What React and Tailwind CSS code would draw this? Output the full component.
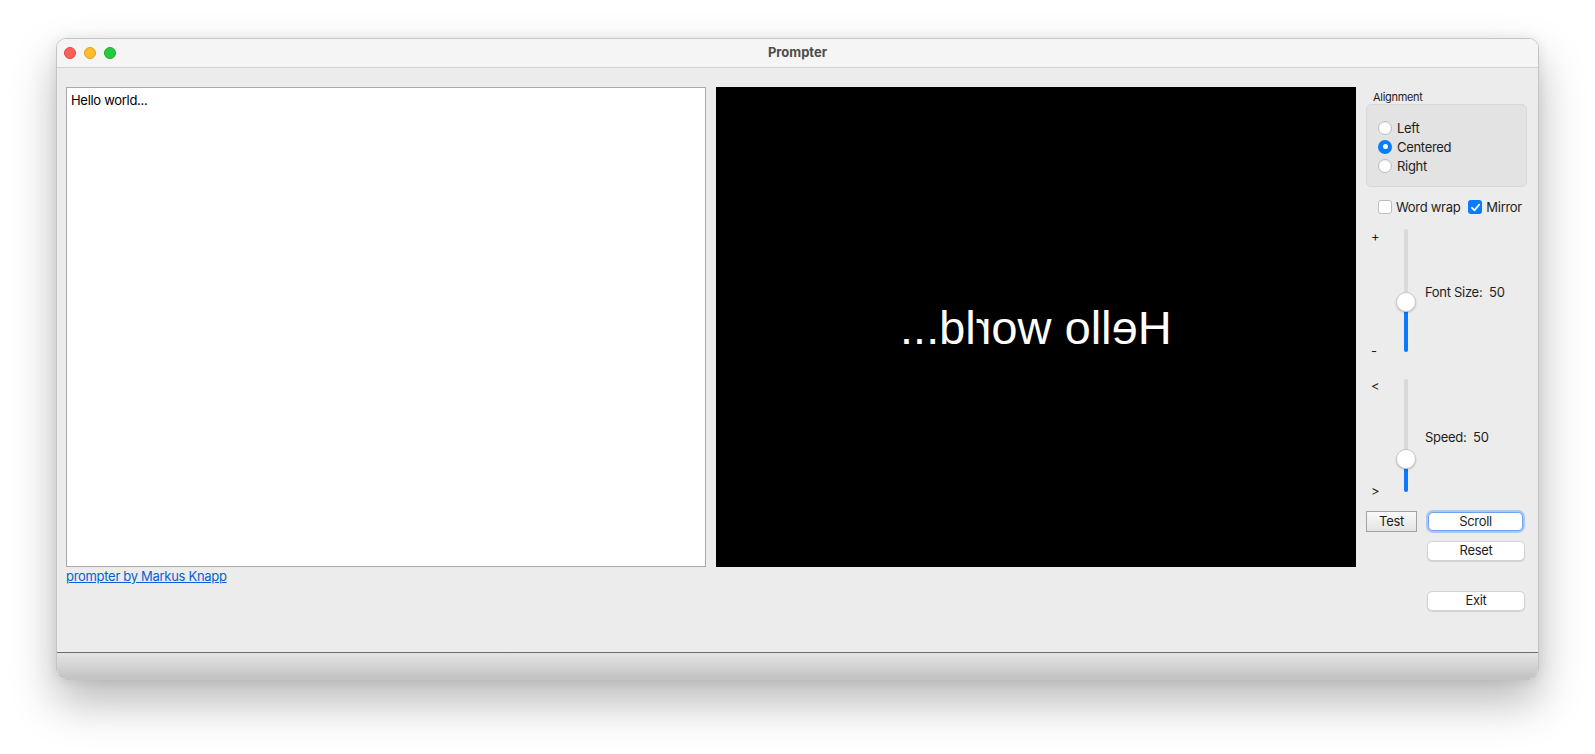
import React from "react";

const ui = { fontFamily: "Inter, 'Liberation Sans', sans-serif" };

function Radio({ checked, label }) {
  return (
    <div className="flex items-center h-[19px]">
      {checked ? (
        <div className="w-[14px] h-[14px] rounded-full bg-[#0a7bff] flex items-center justify-center">
          <div className="w-[5px] h-[5px] rounded-full bg-white" />
        </div>
      ) : (
        <div className="w-[14px] h-[14px] rounded-full bg-white border border-[#bdbdbd] shadow-[inset_0_1px_1px_rgba(0,0,0,0.06)]" />
      )}
      <span className="ml-[5px] text-[13px] leading-[16px] text-[#1e1e1e] whitespace-nowrap">{label}</span>
    </div>
  );
}

function Check({ checked, label }) {
  return (
    <div className="flex items-center shrink-0">
      {checked ? (
        <div className="w-[14px] h-[14px] rounded-[3px] bg-[#0a7bff] flex items-center justify-center">
          <svg width="11" height="11" viewBox="0 0 11 11">
            <path d="M2 5.8 L4.5 8.3 L9.2 2.6" fill="none" stroke="white" strokeWidth="1.8" strokeLinecap="round" strokeLinejoin="round" />
          </svg>
        </div>
      ) : (
        <div className="w-[14px] h-[14px] rounded-[3px] bg-white border border-[#bdbdbd]" />
      )}
      <span className="ml-[4px] text-[13px] leading-[16px] text-[#1e1e1e] whitespace-nowrap">{label}</span>
    </div>
  );
}

function Slider({ height, rowH, knobTop, top, bottom, label, labelTop }) {
  return (
    <div className="flex" style={{ height: rowH }}>
      <div className="w-[30px] flex flex-col justify-between pl-[5px] text-[13px] leading-[14px] text-[#1e1e1e]">
        <span>{top}</span>
        <span>{bottom}</span>
      </div>
      <div className="w-[20px] relative">
        <div className="absolute left-[8px] top-0 w-[4px] rounded-full bg-[#d9d9d9]" style={{ height }} />
        <div
          className="absolute left-[8px] w-[4px] rounded-b-full bg-[#0a7bff]"
          style={{ top: knobTop + 10, height: height - knobTop - 10 }}
        />
        <div
          className="absolute left-0 w-[20px] h-[20px] rounded-full bg-white border border-[#c9c9c9] shadow-[0_1px_2px_rgba(0,0,0,0.2)]"
          style={{ top: knobTop }}
        />
      </div>
      <div className="ml-[9px] text-[13px] leading-[14px] text-[#1e1e1e] whitespace-pre" style={{ paddingTop: labelTop }}>
        {label}
      </div>
    </div>
  );
}

export default function App() {
  return (
    <div className="w-[1595px] h-[754px] bg-white pt-[38px] pl-[56px] overflow-hidden tracking-[-0.3px]" style={ui}>
      <div className="w-[1483px] h-[642px] rounded-[10px] flex flex-col overflow-hidden border border-[#c4c4c4] shadow-[0_22px_45px_rgba(0,0,0,0.28),0_0_12px_rgba(0,0,0,0.08)]">
        {/* Title bar */}
        <div className="h-[29px] shrink-0 bg-[#f5f5f5] border-b border-[#d2d2d2] relative flex items-center justify-center">
          <div className="absolute left-[7px] top-[8px] flex gap-[8px]">
            <div className="w-[12px] h-[12px] rounded-full bg-[#ff5f57] border border-[#e2463f]" />
            <div className="w-[12px] h-[12px] rounded-full bg-[#febc2e] border border-[#e1a116]" />
            <div className="w-[12px] h-[12px] rounded-full bg-[#28c840] border border-[#1aab29]" />
          </div>
          <span className="text-[13px] font-bold text-[#4d4d4d] tracking-normal">Prompter</span>
        </div>

        {/* Content */}
        <div className="flex-1 bg-[#ececec] flex pl-[9px] pt-[19px]">
          <div className="flex flex-col">
            <div className="w-[640px] h-[480px] bg-white border border-[#a9a9a9] pl-[4px] pt-[4px] text-[13px] leading-[16px] text-black">
              Hello world...
            </div>
            <a className="mt-[1px] text-[13px] leading-[16px] text-[#0a5fd6] underline cursor-pointer">
              prompter by Markus Knapp
            </a>
          </div>

          <div className="ml-[10px] w-[640px] h-[480px] bg-black flex items-center justify-center">
            <span
              className="-scale-x-100 text-white text-[47px] leading-none tracking-normal"
              style={{ fontFamily: "'Liberation Sans', Arial, sans-serif" }}
            >
              Hello world...
            </span>
          </div>

          {/* Right column */}
          <div className="ml-[10px] w-[161px] flex flex-col">
            <div className="pt-[4px] pl-[7px] text-[11px] leading-[13px] text-[#1e1e1e]">Alignment</div>
            <div className="h-[83px] bg-[#e3e3e3] border border-[#d8d8d8] rounded-[5px] pl-[11px] pt-[13px]">
              <Radio label="Left" />
              <Radio label="Centered" checked />
              <Radio label="Right" />
            </div>
            <div className="mt-[12px] pl-[12px] flex items-center gap-[8px]">
              <Check label="Word wrap" />
              <Check label="Mirror" checked />
            </div>
            <div className="mt-[14px]">
              <Slider height={123} rowH={129} knobTop={63} top="+" bottom="-" label={"Font Size:  50"} labelTop={56} />
            </div>
            <div className="mt-[21px]">
              <Slider height={113} rowH={119} knobTop={70} top="<" bottom=">" label={"Speed:  50"} labelTop={51} />
            </div>
            <div className="mt-[13px] flex items-center">
              <div className="w-[51px] h-[21px] border border-[#a3a3a3] bg-gradient-to-b from-[#f9f9f9] to-[#e4e4e4] flex items-center justify-center text-[13px] text-[#1e1e1e]">
                Test
              </div>
              <div className="ml-[11px] w-[95px] h-[19px] rounded-[5px] bg-white border border-[#6fa1ee] shadow-[0_0_0_2px_#a8c8f5] flex items-center justify-center text-[13px] text-[#1e1e1e]">
                Scroll
              </div>
            </div>
            <div className="mt-[9px] ml-[61px] w-[98px] h-[20px] rounded-[5px] bg-white border border-[#d2d2d2] shadow-[0_1px_1px_rgba(0,0,0,0.12)] flex items-center justify-center text-[13px] text-[#1e1e1e]">
              Reset
            </div>
            <div className="mt-[30px] ml-[61px] w-[98px] h-[20px] rounded-[5px] bg-white border border-[#d2d2d2] shadow-[0_1px_1px_rgba(0,0,0,0.12)] flex items-center justify-center text-[13px] text-[#1e1e1e]">
              Exit
            </div>
          </div>
        </div>

        {/* Bottom bar */}
        <div className="h-[27px] shrink-0 border-t border-[#6e6e6e] bg-gradient-to-b from-[#e4e4e4] to-[#c2c2c2]" />
      </div>
    </div>
  );
}
